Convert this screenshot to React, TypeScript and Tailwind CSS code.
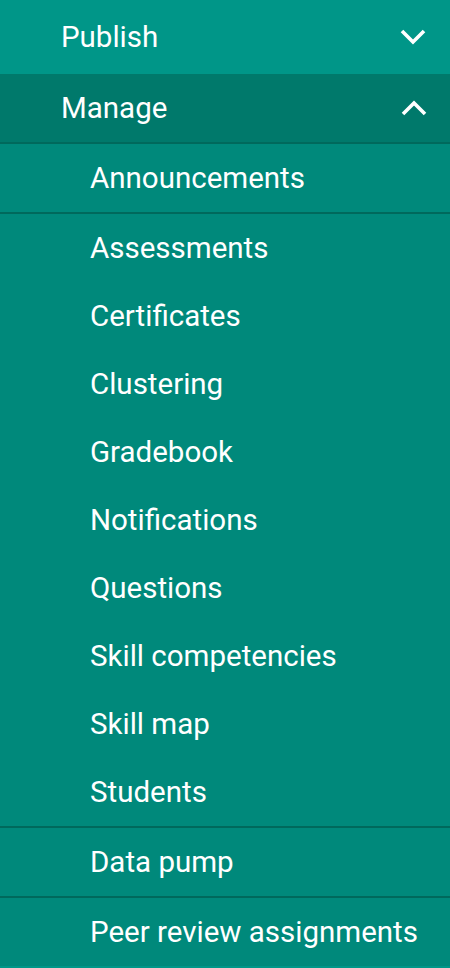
import React from "react";

const manageItems = [
  "Assessments",
  "Certificates",
  "Clustering",
  "Gradebook",
  "Notifications",
  "Questions",
  "Skill competencies",
  "Skill map",
  "Students",
];

function Chevron({ up }: { up?: boolean }) {
  return (
    <svg width="26" height="16" viewBox="0 0 26 16" className="shrink-0">
      <polyline
        points={up ? "2,14 13,3 24,14" : "2,2 13,13 24,2"}
        fill="none"
        stroke="white"
        strokeWidth="3.6"
        strokeLinejoin="miter"
      />
    </svg>
  );
}

export default function App() {
  return (
    <div
      className="w-[450px] h-[968px] bg-[#009688] text-white overflow-hidden"
      style={{ fontFamily: "Roboto, 'Liberation Sans', sans-serif" }}
    >
      <div className="flex items-center justify-between h-[74px] pl-[61px] pr-[24px] bg-[#009688]">
        <span className="text-[29.5px] leading-none pt-[1px]">Publish</span>
        <Chevron />
      </div>
      <div className="flex items-center justify-between h-[68px] pl-[61px] pr-[23px] bg-[#00796b]">
        <span className="text-[29.5px] leading-none pt-[1px]">Manage</span>
        <Chevron up />
      </div>
      <div className="bg-[#00897b] border-t-2 border-[#00695c]">
        <div className="h-[70px] flex items-center pl-[90px] text-[29.5px] leading-none pt-[1px] border-b-2 border-[#00695c]">
          Announcements
        </div>
        <div className="border-b-2 border-[#00695c]">
          {manageItems.map((item) => (
            <div key={item} className="h-[68px] flex items-center pl-[90px] text-[29.5px] leading-none pt-[2px]">
              {item}
            </div>
          ))}
        </div>
        <div className="h-[70px] flex items-center pl-[90px] text-[29.5px] leading-none pt-[2px] border-b-2 border-[#00695c]">
          Data pump
        </div>
        <div className="h-[68px] flex items-center pl-[90px] text-[29.5px] leading-none pt-[2px]">
          Peer review assignments
        </div>
      </div>
    </div>
  );
}
